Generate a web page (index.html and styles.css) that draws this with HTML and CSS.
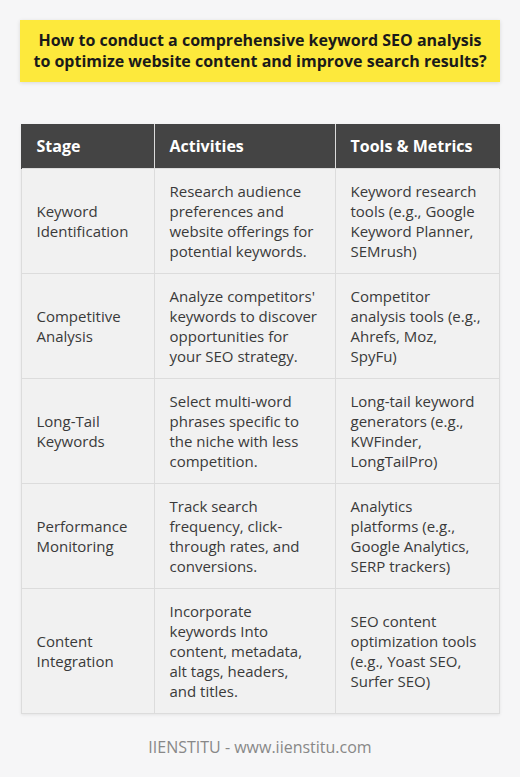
FILE: index.html
```html
<!DOCTYPE html>
<html>
<head>
<meta charset="utf-8">
<link rel="stylesheet" href="styles.css">
</head>
<body>
<div class="page">
  <div class="title">How to conduct a comprehensive keyword SEO analysis to optimize website content and improve search results?</div>
  <table class="grid">
    <colgroup><col class="c1"><col class="c2"><col class="c3"></colgroup>
    <thead>
      <tr><th>Stage</th><th>Activities</th><th>Tools &amp; Metrics</th></tr>
    </thead>
    <tbody>
      <tr><td>Keyword Identification</td><td>Research audience preferences and website offerings for potential keywords.</td><td>Keyword research tools (e.g., Google Keyword Planner, SEMrush)</td></tr>
      <tr><td>Competitive Analysis</td><td>Analyze competitors' keywords to discover opportunities for your SEO strategy.</td><td>Competitor analysis tools (e.g., Ahrefs, Moz, SpyFu)</td></tr>
      <tr><td>Long-Tail Keywords</td><td>Select multi-word phrases specific to the niche with less competition.</td><td>Long-tail keyword generators (e.g., KWFinder, LongTailPro)</td></tr>
      <tr><td>Performance Monitoring</td><td>Track search frequency, click-through rates, and conversions.</td><td>Analytics platforms (e.g., Google Analytics, SERP trackers)</td></tr>
      <tr><td>Content Integration</td><td>Incorporate keywords Into content, metadata, alt tags, headers, and titles.</td><td>SEO content optimization tools (e.g., Yoast SEO, Surfer SEO)</td></tr>
    </tbody>
  </table>
  <div class="footer">IIENSTITU - www.iienstitu.com</div>
</div>
</body>
</html>
```

FILE: styles.css
```css
html, body {
  margin: 0;
  padding: 0;
  background: #f6f6f7;
}
body {
  font-family: "Open Sans", "Liberation Sans", sans-serif;
  color: #333;
}
.page {
  padding: 20px 20px 0 20px;
  display: flex;
  flex-direction: column;
  align-items: center;
}
.title {
  width: 480px;
  box-sizing: border-box;
  background: #fde93c;
  padding: 10px 12px;
  text-align: center;
  font-weight: 700;
  font-size: 16px;
  line-height: 21px;
  color: #1a1a1a;
  box-shadow: 0 1px 4px rgba(0,0,0,0.12);
}
.grid {
  margin-top: 42px;
  width: 478px;
  border-collapse: collapse;
  table-layout: fixed;
  font-size: 15px;
  line-height: 20px;
  box-shadow: 0 1px 3px rgba(0,0,0,0.08);
}
.c1 { width: 133px; }
.c2 { width: 181px; }
.c3 { width: 164px; }
.grid th {
  background: #444444;
  color: #fff;
  font-weight: 700;
  font-size: 16px;
  text-align: left;
  padding: 12px 15px;
  border: 1px solid #dcdcdc;
  border-top: none;
  border-bottom: none;
}
.grid th:first-child { border-left-color: #444444; }
.grid th:last-child { border-right-color: #444444; }
.grid td {
  background: #f1f1f1;
  color: #3a3a3a;
  padding: 12px 15px;
  border: 1px solid #dcdcdc;
  vertical-align: middle;
}
.grid td:nth-child(2) {
  padding-right: 17px;
}
.footer {
  margin-top: 23px;
  font-size: 16px;
  line-height: 20px;
  color: #888;
}
```
